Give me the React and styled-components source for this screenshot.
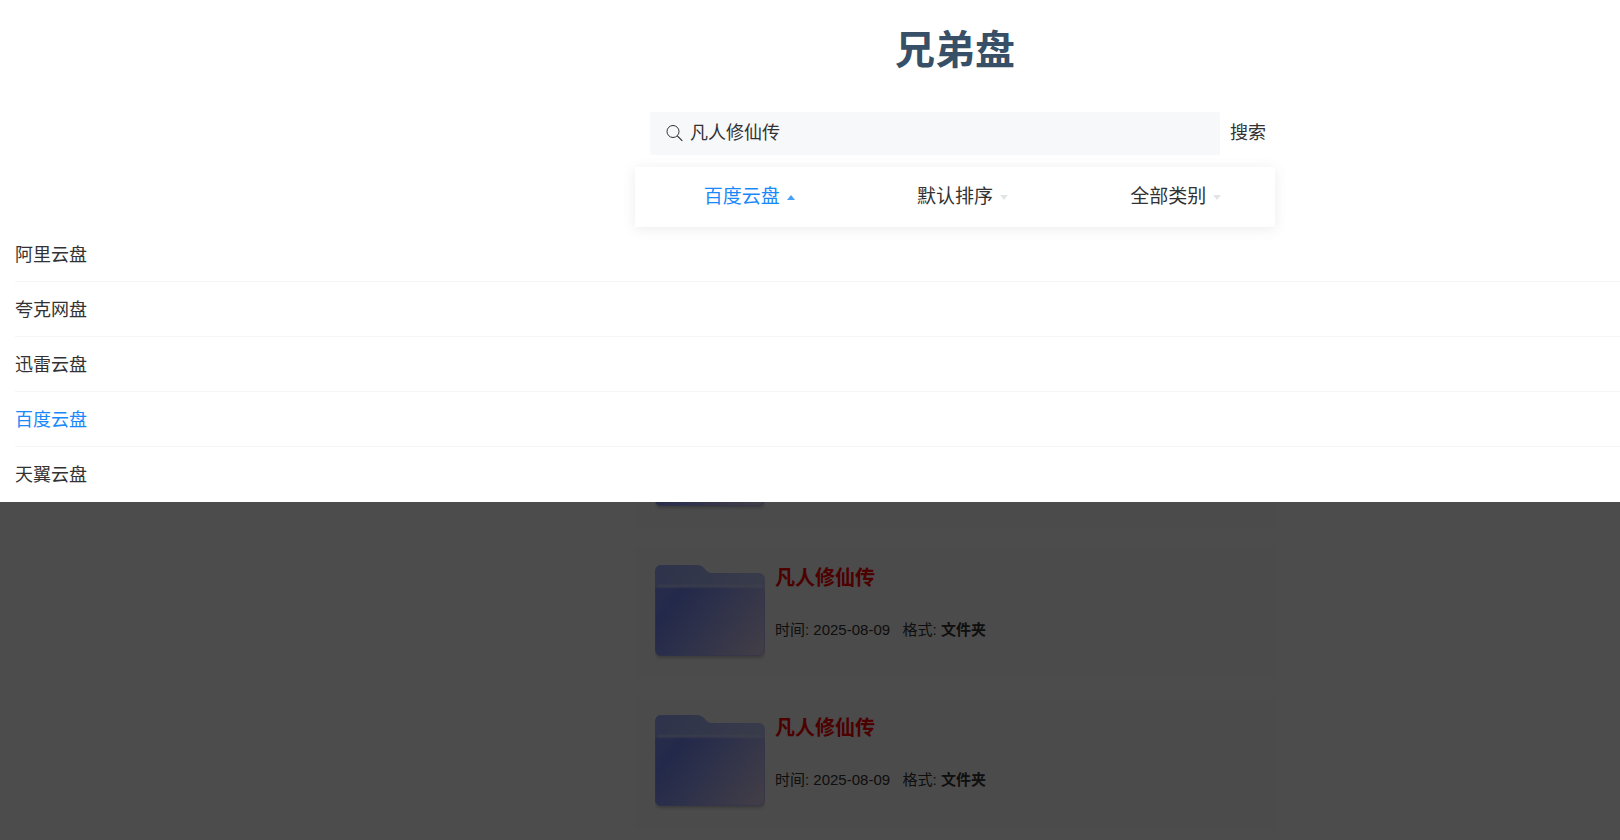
import React, { useState } from 'react';
import styled, { createGlobalStyle } from 'styled-components';

const GlobalStyle = createGlobalStyle`
  * {
    box-sizing: border-box;
  }

  body {
    margin: 0;
    background: #fff;
    color: #323233;
    font-family: "Liberation Sans", "Noto Sans CJK SC", sans-serif;
  }

  button, input {
    font-family: inherit;
    color: inherit;
  }
`;

const Page = styled.div`
  display: flex;
  flex-direction: column;
  height: 100vh;
  overflow: hidden;
`;

const Header = styled.header`
  display: flex;
  flex-direction: column;
  align-items: center;
  padding-left: 290px;
`;

const Title = styled.h1`
  margin: 20px 0 32px;
  font-size: 40px;
  line-height: 60px;
  color: #374f67;
`;

const SearchBar = styled.form`
  display: flex;
  align-items: center;
  width: 100%;
  max-width: 640px;
  padding-left: 15px;
  margin-bottom: 12px;
`;

const SearchField = styled.label`
  display: flex;
  flex: 1;
  align-items: center;
  gap: 6px;
  height: 43px;
  padding: 0 16px 2px;
  border-radius: 2px;
  background: #f7f8fa;
`;

const SearchInput = styled.input`
  flex: 1;
  min-width: 0;
  padding: 0;
  border: 0;
  outline: none;
  background: transparent;
  font-size: 18px;
  line-height: 26px;
`;

const SearchButton = styled.button`
  padding: 0 9px 2px 10px;
  border: 0;
  background: transparent;
  font-size: 18px;
  line-height: 26px;
`;

const FilterBar = styled.nav`
  position: relative;
  z-index: 1;
  display: flex;
  width: 100%;
  max-width: 640px;
  height: 60px;
  background: #fff;
  box-shadow: 0 2px 12px rgba(100, 101, 102, 0.12);
`;

const FilterButton = styled.button`
  display: flex;
  flex: 1;
  align-items: center;
  justify-content: center;
  gap: 7px;
  padding: 0 0 0 15px;
  border: 0;
  background: transparent;
  font-size: 19px;
  line-height: 28px;
  color: ${props => (props.$open ? '#1989fa' : '#323233')};
`;

const Arrow = styled.svg`
  width: 8px;
  height: 5px;
  fill: ${props => (props.$open ? '#1989fa' : '#dcdee0')};
  opacity: 0.8;
  transform: ${props => (props.$open ? 'none' : 'rotate(180deg)')};
`;

const Content = styled.main`
  position: relative;
  flex: 1;
  min-height: 0;
  overflow: hidden;
`;

const Overlay = styled.div`
  position: absolute;
  inset: 0;
  background: rgba(0, 0, 0, 0.7);
`;

const OptionList = styled.ul`
  margin: 0;
  padding: 0 0 0 15px;
  list-style: none;
  background: #fff;
`;

const Option = styled.li`
  border-bottom: 1px solid #f5f6f7;

  &:last-child {
    border-bottom-color: transparent;
  }
`;

const OptionButton = styled.button`
  display: block;
  width: 100%;
  height: 54px;
  padding: 2px 0 0;
  border: 0;
  background: transparent;
  font-size: 18px;
  line-height: 26px;
  text-align: left;
  color: ${props => (props.$active ? '#1989fa' : '#323233')};
`;

const Results = styled.div`
  display: flex;
  flex-direction: column;
  align-items: center;
  gap: 20px;
  padding: 21px 0 0 290px;
`;

const Card = styled.article`
  display: flex;
  gap: 10px;
  width: 100%;
  max-width: 640px;
  height: 130px;
  padding: 10px 20px;
  background: #fafafa;
`;

const FolderImage = styled.svg`
  flex: none;
  width: 110px;
  height: 110px;
`;

const CardTitle = styled.h3`
  margin: 5px 0 26px;
  font-size: 20px;
  line-height: 30px;
  color: #f00;
`;

const CardInfo = styled.p`
  margin: 0;
  font-size: 15px;
  line-height: 22px;
  white-space: pre;
`;

const drives = ['阿里云盘', '夸克网盘', '迅雷云盘', '百度云盘', '天翼云盘'];

const results = [
  { id: 1, name: '凡人修仙传', date: '2025-08-09', format: '文件夹' },
  { id: 2, name: '凡人修仙传', date: '2025-08-09', format: '文件夹' },
  { id: 3, name: '凡人修仙传', date: '2025-08-09', format: '文件夹' },
  { id: 4, name: '凡人修仙传', date: '2025-08-09', format: '文件夹' },
];

const SearchIcon = () => (
  <svg width="18" height="18" viewBox="0 0 18 18" fill="none" stroke="#323233" aria-hidden="true">
    <circle cx="7" cy="7.5" r="6" />
    <path d="M11.3 11.8l5 5" strokeWidth="1.2" />
  </svg>
);

const Folder = () => (
  <FolderImage viewBox="0 0 110 110" aria-hidden="true">
    <defs>
      <linearGradient id="back" x1="0" y1="0" x2="1" y2="0.3">
        <stop offset="0" stopColor="#98abfb" />
        <stop offset="1" stopColor="#bcc6f6" />
      </linearGradient>
      <linearGradient id="front" x1="0" y1="0.25" x2="1" y2="0.75">
        <stop offset="0" stopColor="#7f92fb" />
        <stop offset="0.12" stopColor="#7589f8" />
        <stop offset="0.5" stopColor="#9da7f8" />
        <stop offset="1" stopColor="#d8cbee" />
      </linearGradient>
      <linearGradient id="shine" x1="0" y1="0" x2="0" y2="1">
        <stop offset="0" stopColor="#dde2ff" stopOpacity="0" />
        <stop offset="0.5" stopColor="#dde2ff" stopOpacity="0.6" />
        <stop offset="1" stopColor="#dde2ff" stopOpacity="0" />
      </linearGradient>
      <filter id="shadow" x="-10%" y="-10%" width="120%" height="130%">
        <feDropShadow dx="0" dy="2" stdDeviation="1.5" floodColor="#555" floodOpacity="0.3" />
      </filter>
    </defs>
    <path
      d="M0 13a6 6 0 0 1 6-6h36c8 0 8 8 15 8h47a6 6 0 0 1 6 6v30H0z"
      fill="url(#back)"
    />
    <rect y="28" width="110" height="70" rx="6" fill="url(#front)" filter="url(#shadow)" />
    <rect x="3" y="26" width="104" height="5" fill="url(#shine)" />
    <path
      d="M0.5 34v57.5a6 6 0 0 0 6 6h97a6 6 0 0 0 6-6V34"
      fill="none"
      stroke="#a0a8ff"
      strokeOpacity="0.5"
    />
  </FolderImage>
);

const App = () => {
  const [keyword, setKeyword] = useState('凡人修仙传');
  const [drive, setDrive] = useState('百度云盘');
  const [open, setOpen] = useState(0);

  const filters = [drive, '默认排序', '全部类别'];

  return (
    <Page>
      <GlobalStyle />
      <Header>
        <Title>兄弟盘</Title>
        <SearchBar onSubmit={e => e.preventDefault()}>
          <SearchField>
            <SearchIcon />
            <SearchInput
              aria-label="搜索"
              value={keyword}
              onChange={e => setKeyword(e.target.value)}
            />
          </SearchField>
          <SearchButton type="submit">搜索</SearchButton>
        </SearchBar>
        <FilterBar>
          {filters.map((label, i) => (
            <FilterButton
              key={label}
              type="button"
              $open={open === i}
              onClick={() => setOpen(open === i ? -1 : i)}
            >
              {label}
              <Arrow $open={open === i} viewBox="0 0 8 5" preserveAspectRatio="none" aria-hidden="true">
                <path d="M4 0l4 5H0z" />
              </Arrow>
            </FilterButton>
          ))}
        </FilterBar>
      </Header>
      <Content>
        <Results>
          {results.map(item => (
            <Card key={item.id}>
              <Folder />
              <div>
                <CardTitle>{item.name}</CardTitle>
                <CardInfo>
                  时间: {item.date}{'   '}格式: <strong>{item.format}</strong>
                </CardInfo>
              </div>
            </Card>
          ))}
        </Results>
        {open === 0 && (
          <Overlay>
            <OptionList>
              {drives.map(name => (
                <Option key={name}>
                  <OptionButton
                    type="button"
                    $active={name === drive}
                    onClick={() => setDrive(name)}
                  >
                    {name}
                  </OptionButton>
                </Option>
              ))}
            </OptionList>
          </Overlay>
        )}
      </Content>
    </Page>
  );
};

export default App;
